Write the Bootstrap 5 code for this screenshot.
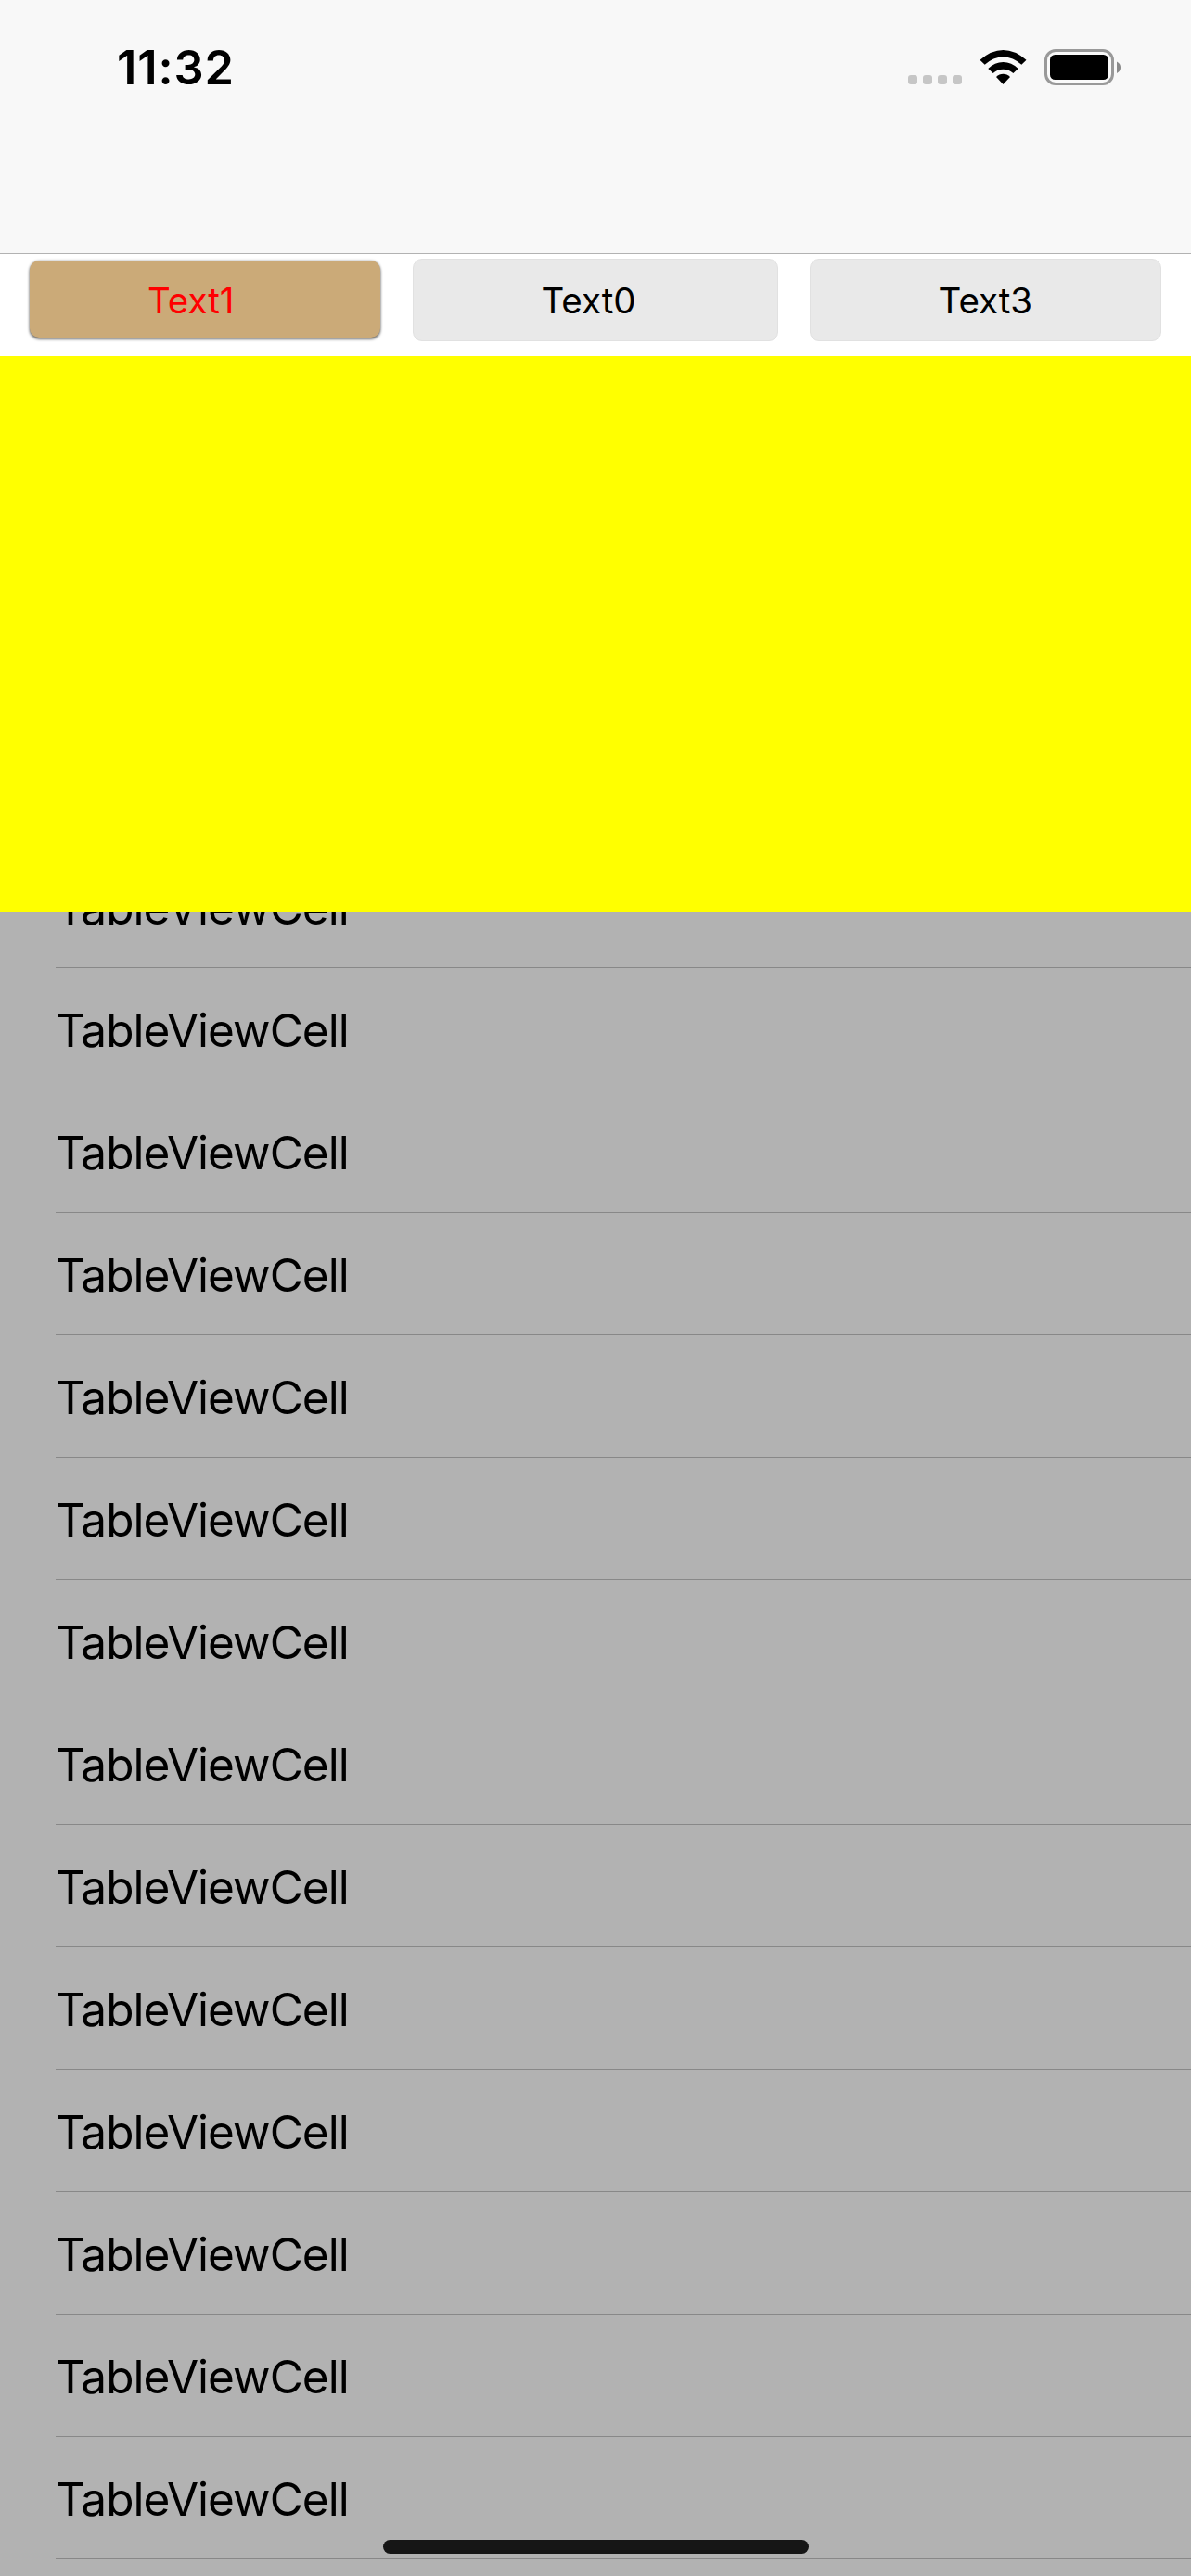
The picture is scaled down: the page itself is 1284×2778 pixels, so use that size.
<!DOCTYPE html>
<html lang="en">
<head>
<meta charset="utf-8">
<meta name="viewport" content="width=device-width, initial-scale=1">
<title>TableView</title>
<link href="https://cdn.jsdelivr.net/npm/bootstrap@5.3.0/dist/css/bootstrap.min.css" rel="stylesheet">
<style>
body { font-family: Inter, "Liberation Sans", sans-serif; color: #000; background: #b2b2b2; }
.screen { width: 1284px; height: 2778px; }
.top-bar { height: 274px; background: #f8f8f8; border-bottom: 1px solid #b2b2b2; }
.status { height: 146px; padding: 0 76px 0 126px; }
.clock { font-size: 50.5px; font-weight: 600; line-height: 60px; letter-spacing: .9px; }
.tabs { height: 110px; padding: 5px 32px 0; gap: 34px; }
.tab-btn { --bs-btn-border-radius: 10px; --bs-btn-padding-x: 0; --bs-btn-padding-y: 0; --bs-btn-border-width: 1px;
  --bs-btn-bg: #e9e9e9; --bs-btn-border-color: #e1e1e1; --bs-btn-color: #000;
  --bs-btn-font-size: 38.5px; width: 380px; height: 89px; line-height: 88px; }
.tab-btn.mid { width: 394px; padding-right: 15px; }
.tab-btn.picked { --bs-btn-bg: #cbaa78; --bs-btn-color: #f00; height: 83px; margin-top: 2px; border: 0; line-height: 86px; width: 379px; margin-right: 1px; padding-right: 31px;
  box-shadow: 0 2px 3px rgba(0,0,0,.5), 0 0 3px rgba(0,0,0,.3); }
.hero { height: 600px; background: #ff0; }
.rows { margin-top: -72px; }
.cell { height: 132px; margin-left: 60px; border-bottom: 1px solid #888; font-size: 49.5px; line-height: 134px; }
.cell span { letter-spacing: -.97px; }
.home { left: 413px; top: 2739px; width: 459px; height: 15px; background: #161616; }
</style>
</head>
<body>
<div class="screen position-relative overflow-hidden d-flex flex-column">
  <header class="top-bar flex-shrink-0">
    <div class="status d-flex justify-content-between align-items-center">
      <span class="clock">11:32</span>
      <svg width="230" height="50" viewBox="978 48 230 50">
        <g fill="#c6c6c6"><rect x="979" y="81" width="10" height="10" rx="3"/><rect x="995" y="81" width="10" height="10" rx="3"/><rect x="1011" y="81" width="10" height="10" rx="3"/><rect x="1027" y="81" width="10" height="10" rx="3"/></g>
        <path d="M1056.5 64.8Q1068.500 54 1081.500 54T1106.500 64.800L1101.300 69.800Q1092.200 61.500 1081.500 61.500T1061.700 69.800Z"/>
        <path d="M1065.300 73.900Q1072.500 66.900 1081.500 66.900T1097.700 73.900L1092.400 79.100Q1087.700 74.700 1081.500 74.700T1070.600 79.100Z"/>
        <path d="M1074 83Q1077.300 79.700 1081.500 79.700T1089 83L1081.500 91Z"/>
        <rect x="1127.500" y="54.500" width="72" height="36" rx="10.500" fill="#fff" fill-opacity=".3" stroke="#999" stroke-width="3"/>
        <rect x="1132" y="59" width="63" height="27" rx="5.500"/>
        <path d="M1204 66.500Q1208 68.500 1208 72.700T1204 79Z" fill="#8a8a8a"/>
      </svg>
    </div>
  </header>
  <nav class="tabs bg-white d-flex align-items-start flex-shrink-0">
    <button class="btn tab-btn picked">Text1</button>
    <button class="btn tab-btn mid">Text0</button>
    <button class="btn tab-btn">Text3</button>
  </nav>
  <section class="hero flex-shrink-0"></section>
  <main class="flex-grow-1 overflow-hidden">
    <div class="rows">
      <div class="cell"><span>TableViewCell</span></div>
      <div class="cell"><span>TableViewCell</span></div>
      <div class="cell"><span>TableViewCell</span></div>
      <div class="cell"><span>TableViewCell</span></div>
      <div class="cell"><span>TableViewCell</span></div>
      <div class="cell"><span>TableViewCell</span></div>
      <div class="cell"><span>TableViewCell</span></div>
      <div class="cell"><span>TableViewCell</span></div>
      <div class="cell"><span>TableViewCell</span></div>
      <div class="cell"><span>TableViewCell</span></div>
      <div class="cell"><span>TableViewCell</span></div>
      <div class="cell"><span>TableViewCell</span></div>
      <div class="cell"><span>TableViewCell</span></div>
      <div class="cell"><span>TableViewCell</span></div>
    </div>
  </main>
  <div class="home position-absolute rounded-pill"></div>
</div>
<script src="https://cdn.jsdelivr.net/npm/bootstrap@5.3.0/dist/js/bootstrap.bundle.min.js"></script>
</body>
</html>
